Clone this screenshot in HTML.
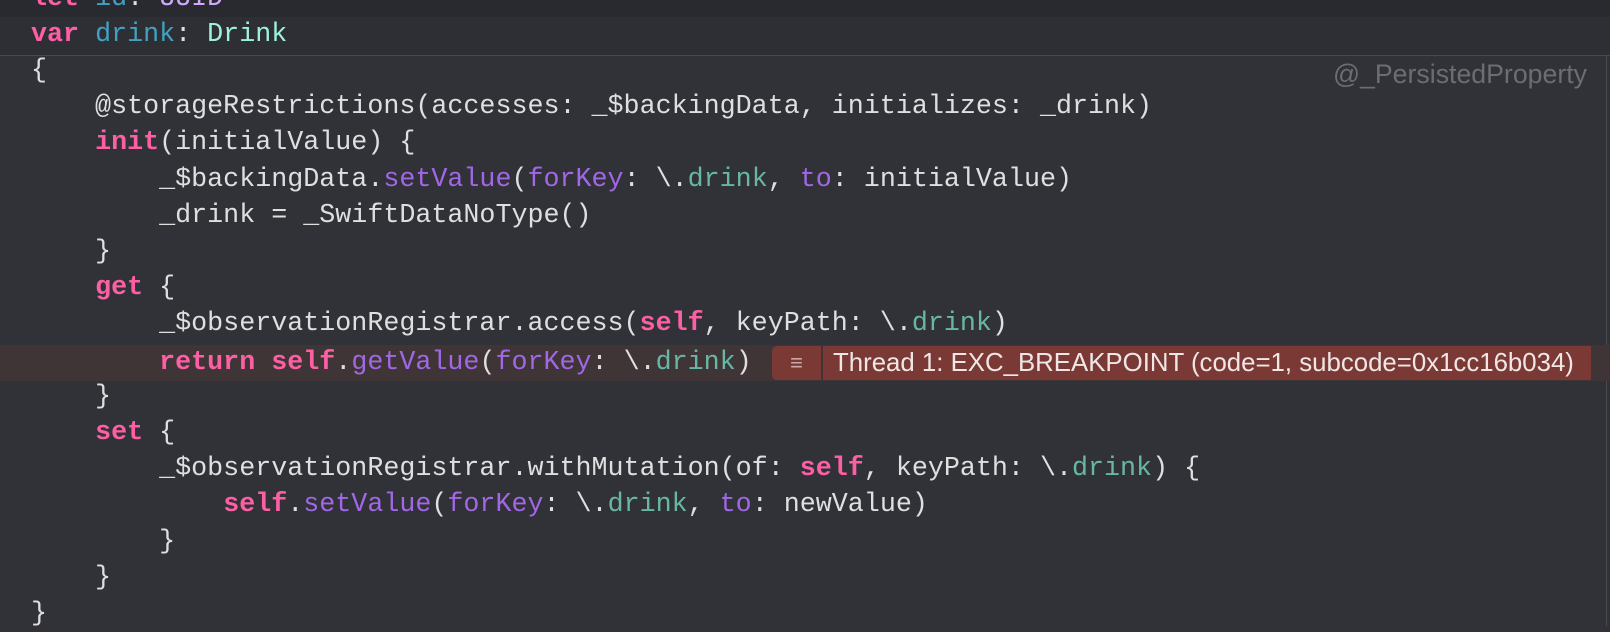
<!DOCTYPE html>
<html><head><meta charset="utf-8"><style>
html,body{margin:0;padding:0}
body{width:1610px;height:626px;overflow:hidden;background:#313238;position:relative;font-family:"Liberation Mono",monospace;font-size:26.7px;color:#dfdfe0}
.top{position:absolute;left:0;top:0;width:1610px;height:17px;background:#292a2f}
.decl{position:absolute;left:0;top:17px;width:1610px;height:38px;background:#2e2f35;border-bottom:1px solid #4a4b51}
.vline{position:absolute;left:1606px;top:55px;width:1px;height:571px;background:#4a4b51}
.errrow{position:absolute;left:0;top:345px;width:1610px;height:36px;background:#3f3537}
.l{position:absolute;left:31px;height:36.2px;line-height:36.2px;white-space:pre}
.k{color:#fc5fa3;font-weight:bold}
.d{color:#41a1c0}
.t{color:#9ef1dd}
.u{color:#d0a8ff}
.p{color:#67b7a4}
.f{color:#a167e6}
.ann{position:absolute;right:23px;top:56px;font-family:"Liberation Sans",sans-serif;font-size:26.7px;color:#6c6c71;line-height:36px}
.err1{position:absolute;left:772px;top:346px;width:49px;height:34px;background:#7a3934;border-radius:5px 0 0 5px;color:#c9a7a4;font-family:"Liberation Sans",sans-serif;font-size:22px;text-align:center;line-height:34px}
.err2{position:absolute;left:823px;top:346px;width:768px;height:34px;background:#7a3934;color:#f0e6e5;font-family:"Liberation Sans",sans-serif;font-size:25.8px;line-height:34px;padding-left:10px;box-sizing:border-box;white-space:nowrap}
</style></head><body>
<div class="top"></div><div class="decl"></div><div class="vline"></div><div class="errrow"></div>
<div class="ann">@_PersistedProperty</div>
<div class="l" style="top:-19.4px"><span class="k">let</span> <span class="d">id</span>: <span class="u">UUID</span></div>
<div class="l" style="top:16.8px"><span class="k">var</span> <span class="d">drink</span>: <span class="t">Drink</span></div>
<div class="l" style="top:53px">{</div>
<div class="l" style="top:89.2px">    @storageRestrictions(accesses: _$backingData, initializes: _drink)</div>
<div class="l" style="top:125.4px">    <span class="k">init</span>(initialValue) {</div>
<div class="l" style="top:161.6px">        _$backingData.<span class="f">setValue</span>(<span class="f">forKey</span>: \.<span class="p">drink</span>, <span class="f">to</span>: initialValue)</div>
<div class="l" style="top:197.8px">        _drink = _SwiftDataNoType()</div>
<div class="l" style="top:234px">    }</div>
<div class="l" style="top:270.2px">    <span class="k">get</span> {</div>
<div class="l" style="top:306.4px">        _$observationRegistrar.access(<span class="k">self</span>, keyPath: \.<span class="p">drink</span>)</div>
<div class="l" style="top:344.6px">        <span class="k">return</span> <span class="k">self</span>.<span class="f">getValue</span>(<span class="f">forKey</span>: \.<span class="p">drink</span>)</div>
<div class="l" style="top:378.8px">    }</div>
<div class="l" style="top:415px">    <span class="k">set</span> {</div>
<div class="l" style="top:451.2px">        _$observationRegistrar.withMutation(of: <span class="k">self</span>, keyPath: \.<span class="p">drink</span>) {</div>
<div class="l" style="top:487.4px">            <span class="k">self</span>.<span class="f">setValue</span>(<span class="f">forKey</span>: \.<span class="p">drink</span>, <span class="f">to</span>: newValue)</div>
<div class="l" style="top:523.6px">        }</div>
<div class="l" style="top:559.8px">    }</div>
<div class="l" style="top:596px">}</div>
<div class="err1">≡</div>
<div class="err2">Thread 1: EXC_BREAKPOINT (code=1, subcode=0x1cc16b034)</div>
</body></html>
